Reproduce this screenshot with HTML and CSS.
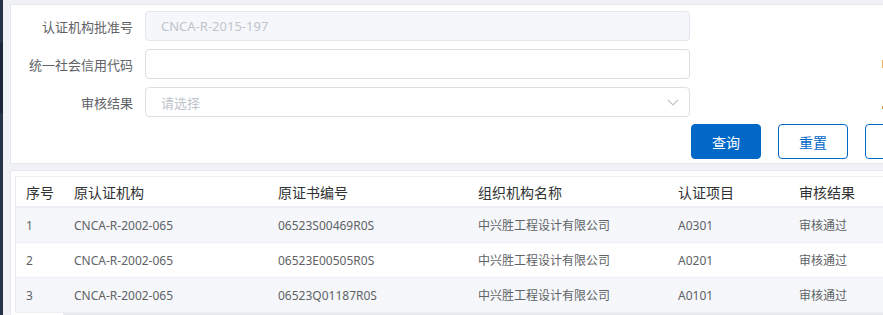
FILE: index.html
```html
<!DOCTYPE html>
<html lang="zh-CN">
<head>
    <meta charset="UTF-8">
    <meta name="viewport" content="width=device-width, initial-scale=1.0">
    <title>审核结果查询</title>
    <link rel="stylesheet" href="styles.css">
</head>
<body>
    <div class="layout">
        <aside class="sidebar">
            <div class="menu-item"></div>
            <div class="menu-item active"></div>
            <div class="menu-item"></div>
        </aside>

        <main class="main">
            <section class="card search-card">
                <form class="search-form">
                    <div class="form-row">
                        <label class="form-label">认证机构批准号</label>
                        <input class="form-input" type="text" value="CNCA-R-2015-197" disabled>
                    </div>
                    <div class="form-row">
                        <label class="form-label">统一社会信用代码</label>
                        <input class="form-input" type="text">
                        <span class="hint-mark"></span>
                    </div>
                    <div class="form-row">
                        <label class="form-label">审核结果</label>
                        <div class="form-select">
                            <span class="placeholder">请选择</span>
                            <svg class="arrow" width="12" height="7" viewBox="0 0 12 7">
                                <path d="M1 1 L6 6 L11 1" fill="none" stroke="#c0c4cc" stroke-width="1.2"/>
                            </svg>
                        </div>
                        <span class="hint-mark hint-low"></span>
                    </div>
                    <div class="form-actions">
                        <button type="button" class="btn btn-primary">查询</button>
                        <button type="button" class="btn btn-plain">重置</button>
                        <button type="button" class="btn btn-plain" aria-label="导出"></button>
                    </div>
                </form>
            </section>

            <section class="card table-card">
                <table class="data-table">
                    <colgroup>
                        <col style="width: 48px">
                        <col style="width: 204px">
                        <col style="width: 200px">
                        <col style="width: 200px">
                        <col style="width: 121px">
                        <col style="width: 150px">
                    </colgroup>
                    <thead>
                        <tr>
                            <th>序号</th>
                            <th>原认证机构</th>
                            <th>原证书编号</th>
                            <th>组织机构名称</th>
                            <th>认证项目</th>
                            <th>审核结果</th>
                        </tr>
                    </thead>
                    <tbody>
                        <tr>
                            <td>1</td>
                            <td>CNCA-R-2002-065</td>
                            <td>06523S00469R0S</td>
                            <td>中兴胜工程设计有限公司</td>
                            <td>A0301</td>
                            <td>审核通过</td>
                        </tr>
                        <tr>
                            <td>2</td>
                            <td>CNCA-R-2002-065</td>
                            <td>06523E00505R0S</td>
                            <td>中兴胜工程设计有限公司</td>
                            <td>A0201</td>
                            <td>审核通过</td>
                        </tr>
                        <tr>
                            <td>3</td>
                            <td>CNCA-R-2002-065</td>
                            <td>06523Q01187R0S</td>
                            <td>中兴胜工程设计有限公司</td>
                            <td>A0101</td>
                            <td>审核通过</td>
                        </tr>
                    </tbody>
                </table>
                <div class="scrollbar">
                    <div class="scroll-fixed"></div>
                </div>
            </section>
        </main>
    </div>
</body>
</html>
```

FILE: styles.css
```css
body {
    margin: 0;
    background-color: #f0f2f5;
    font-family: "Noto Sans", "Noto Sans CJK SC", sans-serif;
    color: #606266;
    overflow: hidden;
}

.layout {
    display: flex;
    height: 315px;
}

.sidebar {
    width: 3px;
    flex-shrink: 0;
    background-color: #263248;
    display: flex;
    flex-direction: column;
}
.menu-item {
    height: 43px;
}
.menu-item.active {
    height: 70px;
    background-color: #1d2638;
}

.main {
    flex: 1;
    min-width: 0;
    padding: 4px 0 0 7px;
    overflow: hidden;
}

.card {
    width: 1000px;
    background: #fff;
    border: 1px solid #e6e8eb;
    box-sizing: border-box;
}

/* 查询条件 */
.search-card {
    height: 160px;
    padding: 6px 0 0 0;
}
.search-form {
    display: flex;
    flex-direction: column;
    gap: 8px;
}
.form-row {
    display: flex;
    align-items: center;
    height: 30px;
}
.form-label {
    width: 122px;
    margin-right: 12px;
    text-align: right;
    font-size: 13px;
    color: #606266;
}
.form-input,
.form-select {
    width: 545px;
    height: 30px;
    box-sizing: border-box;
    border: 1px solid #dcdfe6;
    border-radius: 4px;
    padding: 0 15px;
    font-family: inherit;
    font-size: 13px;
    color: #606266;
    background: #fff;
}
.form-input:disabled {
    background-color: #f5f7fa;
    border-color: #e4e7ed;
    color: #c0c4cc;
}
.form-select {
    display: flex;
    align-items: center;
    justify-content: space-between;
    padding-right: 10px;
}
.placeholder {
    color: #c0c4cc;
}
.hint-mark {
    width: 4px;
    height: 8px;
    margin-left: 192px;
    background-color: #f0b060;
}
.hint-low {
    height: 3px;
    align-self: flex-end;
    margin-bottom: 8px;
    background-color: #e09040;
}

.form-actions {
    display: flex;
    gap: 17px;
    padding-left: 680px;
    margin-top: -1px;
}
.btn {
    width: 70px;
    height: 35px;
    flex-shrink: 0;
    border-radius: 4px;
    font-family: inherit;
    font-size: 14px;
    cursor: pointer;
}
.btn-primary {
    background-color: #0168c8;
    border: 1px solid #0168c8;
    color: #fff;
}
.btn-plain {
    background-color: #fff;
    border: 1px solid #0168c8;
    color: #0168c8;
}

/* 结果列表 */
.table-card {
    margin-top: 6px;
    padding: 5px 0 0 4px;
    height: 200px;
}
.data-table {
    table-layout: fixed;
    border-collapse: collapse;
    border-top: 1px solid #ebeef5;
    border-left: 1px solid #ebeef5;
}
.data-table th {
    height: 29px;
    padding: 0 10px;
    text-align: left;
    font-size: 14px;
    font-weight: normal;
    color: #303133;
    white-space: nowrap;
    border-bottom: 2px solid #ebeef5;
}
.data-table td {
    height: 34px;
    padding: 0 10px;
    font-size: 12px;
    color: #606266;
    border-bottom: 1px solid #ebeef5;
    white-space: nowrap;
}
.data-table tbody tr:nth-child(odd) td {
    background-color: #f5f7fa;
}

.scrollbar {
    display: flex;
    height: 6px;
    background-color: #e6e9ee;
    width: 923px;
}
.scroll-fixed {
    width: 48px;
    background-color: #fff;
}
```
